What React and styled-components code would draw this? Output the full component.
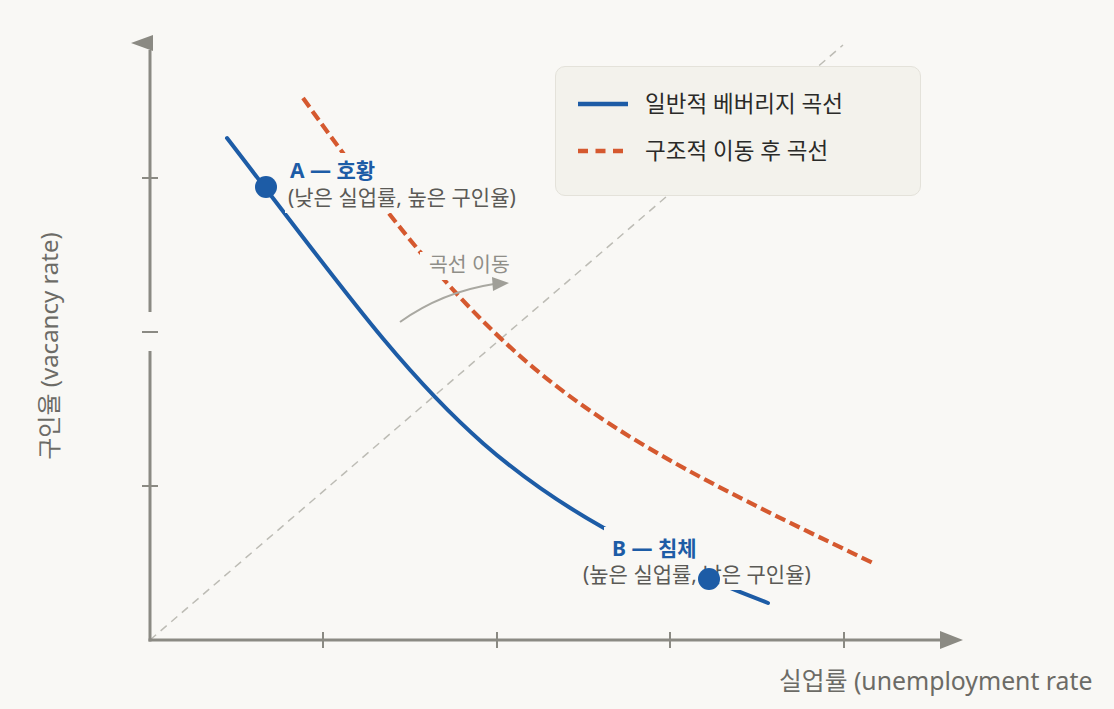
import React from 'react';
import styled, { createGlobalStyle } from 'styled-components';

const C = {
  bg: '#f9f8f5',
  axis: '#8b8a83',
  blue: '#1d5ca6',
  red: '#d5592f',
  guide: '#bdbcb5',
  note: '#5b5a56',
  muted: '#8f8e88',
  ink: '#2a2a28',
  label: '#6c6b66',
};

const FONT = `"Noto Sans", "Noto Sans CJK KR", sans-serif`;

const GlobalStyle = createGlobalStyle`
  html, body {
    margin: 0;
    padding: 0;
    background: ${C.bg};
    font-family: ${FONT};
  }
`;

const Frame = styled.div`
  position: relative;
  width: 1114px;
  height: 709px;
  overflow: hidden;
  background: ${C.bg};
`;

const ChartSvg = styled.svg`
  display: block;
`;

const AxisTitle = styled.text`
  font-family: ${FONT};
  font-size: ${p => p.size}px;
  fill: ${C.label};
`;

const PointTitle = styled.text`
  font-family: ${FONT};
  font-size: 21px;
  font-weight: 700;
  fill: ${C.blue};
`;

const PointNote = styled.text`
  font-family: ${FONT};
  font-size: 21px;
  fill: ${C.note};
`;

const ShiftLabel = styled.text`
  font-family: ${FONT};
  font-size: 20.5px;
  fill: ${C.muted};
`;

const Legend = styled.div`
  position: absolute;
  left: 555px;
  top: 66px;
  width: 366px;
  height: 130px;
  box-sizing: border-box;
  padding: 22px 22px 0;
  display: flex;
  flex-direction: column;
  gap: 17px;
  background: #f3f2ec;
  border: 1px solid #e4e2da;
  border-radius: 10px;
`;

const LegendRow = styled.div`
  display: flex;
  align-items: center;
  gap: 17px;
  height: 30px;
`;

const Swatch = styled.svg`
  flex: none;
  display: block;
`;

const LegendLabel = styled.span`
  font-family: ${FONT};
  font-size: 22.5px;
  color: ${C.ink};
  line-height: 30px;
`;

// both curves are single cubic arcs, fitted to the picture
const BASE_CURVE = 'M 227 138 C 427 398 480 492 768 603';
const SHIFTED_CURVE = 'M 303 98 C 503 378 573 419 873 563';

const X_TICKS = [323, 497, 670, 844];
const Y_TICKS = [178, 332, 486];

// background patches behind annotation text (they cut the curves)
const MASKS = [
  { x: 285, y: 153, w: 102, h: 29 },
  { x: 285, y: 182, w: 240, h: 31 },
  { x: 420, y: 252, w: 96, h: 28 },
  { x: 604, y: 527, w: 108, h: 34 },
  { x: 580, y: 561, w: 240, h: 29 },
];

const LEGEND = [
  { label: '일반적 베버리지 곡선', color: C.blue, dash: null },
  { label: '구조적 이동 후 곡선', color: C.red, dash: '10 7.5' },
];

const App = () => (
  <>
    <GlobalStyle />
    <Frame>
      <ChartSvg width="1114" height="709" viewBox="0 0 1114 709">
        {/* 45° guide */}
        <line x1="150" y1="640" x2="843" y2="45" stroke={C.guide} strokeWidth="1.5" strokeDasharray="8 6" />

        {/* axes */}
        <line x1="150" y1="50" x2="150" y2="312" stroke={C.axis} strokeWidth="3" />
        <line x1="150" y1="351" x2="150" y2="641.5" stroke={C.axis} strokeWidth="3" />
        <polygon points="131,43 153,35 153,51" fill={C.axis} />
        <line x1="148.5" y1="640" x2="942" y2="640" stroke={C.axis} strokeWidth="3" />
        <polygon points="963,640 940,631 940,649" fill={C.axis} />
        {Y_TICKS.map((y) => (
          <line key={y} x1="142" y1={y} x2="158" y2={y} stroke={C.axis} strokeWidth="2" />
        ))}
        {X_TICKS.map((x) => (
          <line key={x} x1={x} y1="632" x2={x} y2="648" stroke={C.axis} strokeWidth="2" />
        ))}

        {/* curves */}
        <path d={SHIFTED_CURVE} fill="none" stroke={C.red} strokeWidth="4.2" strokeDasharray="11 5" />
        <path d={BASE_CURVE} fill="none" stroke={C.blue} strokeWidth="4" strokeLinecap="round" />

        {MASKS.map((m, i) => (
          <rect key={i} x={m.x} y={m.y} width={m.w} height={m.h} fill={C.bg} />
        ))}

        {/* shift arrow */}
        <path d="M 400 322 Q 442 292 494 284" fill="none" stroke="#a9a8a1" strokeWidth="2" />
        <polygon points="509,283 492,277 493,291" fill="#a09f98" />
        <ShiftLabel x="429" y="272">곡선 이동</ShiftLabel>

        {/* annotations */}
        <PointTitle x="290" y="178">A — 호황</PointTitle>
        <PointNote x="288" y="205">(낮은 실업률, 높은 구인율)</PointNote>
        <PointTitle x="612" y="556">B — 침체</PointTitle>
        <PointNote x="583" y="582">(높은 실업률, 낮은 구인율)</PointNote>

        <circle cx="266" cy="187" r="11" fill={C.blue} />
        <circle cx="709" cy="579" r="11" fill={C.blue} />

        {/* axis titles */}
        <AxisTitle size="24" x="0" y="0" textAnchor="middle" transform="translate(58 346) rotate(-90)">
          구인율 (vacancy rate)
        </AxisTitle>
        <AxisTitle size="24.8" x="779" y="690">실업률 (unemployment rate</AxisTitle>
      </ChartSvg>

      <Legend>
        {LEGEND.map((item) => (
          <LegendRow key={item.label}>
            <Swatch width="50" height="6" viewBox="0 0 50 6">
              <line x1="0" y1="3" x2="50" y2="3" stroke={item.color} strokeWidth="4.5" strokeDasharray={item.dash || undefined} />
            </Swatch>
            <LegendLabel>{item.label}</LegendLabel>
          </LegendRow>
        ))}
      </Legend>
    </Frame>
  </>
);

export default App;
